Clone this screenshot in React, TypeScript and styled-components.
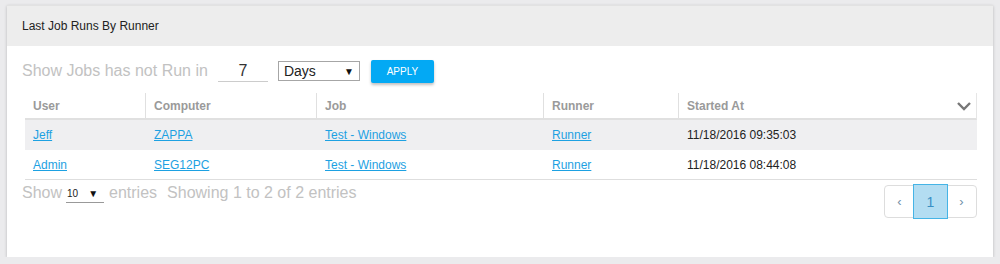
import styled, { createGlobalStyle } from 'styled-components'

const GlobalStyle = createGlobalStyle`
  body {
    margin: 0;
    background: #ebebed;
    font-family: 'Liberation Sans', Arial, sans-serif;
  }
`

interface IRun {
  user: string
  computer: string
  job: string
  runner: string
  started: string
}

const runs: IRun[] = [
  { user: 'Jeff', computer: 'ZAPPA', job: 'Test - Windows', runner: 'Runner', started: '11/18/2016 09:35:03' },
  { user: 'Admin', computer: 'SEG12PC', job: 'Test - Windows', runner: 'Runner', started: '11/18/2016 08:44:08' },
]

const columns = [
  { label: 'User', width: 120 },
  { label: 'Computer', width: 171 },
  { label: 'Job', width: 227 },
  { label: 'Runner', width: 135 },
  { label: 'Started At', width: 0 },
]

export default function App() {
  return (
    <>
      <GlobalStyle />
      <Card>
        <CardHeader>Last Job Runs By Runner</CardHeader>
        <CardBody>
          <FilterRow>
            <FilterLabel>Show Jobs has not Run in</FilterLabel>
            <DaysInput>7</DaysInput>
            <UnitSelect>
              <span>Days</span>
              <Caret>▼</Caret>
            </UnitSelect>
            <ApplyButton>APPLY</ApplyButton>
          </FilterRow>

          <Table>
            <HeadRow>
              {columns.map((c, i) => (
                <HeadCell key={c.label} $width={c.width} $first={i === 0}>
                  {c.label}
                  {i === columns.length - 1 && (
                    <Chevron width="16" height="10" viewBox="0 0 16 10">
                      <path d="M2 2 L8 8 L14 2" fill="none" stroke="#777" strokeWidth="2.4" />
                    </Chevron>
                  )}
                </HeadCell>
              ))}
            </HeadRow>
            {runs.map((r, i) => (
              <BodyRow key={r.user} $striped={i === 0}>
                <Cell $width={120}><Link>{r.user}</Link></Cell>
                <Cell $width={171}><Link>{r.computer}</Link></Cell>
                <Cell $width={227}><Link>{r.job}</Link></Cell>
                <Cell $width={135}><Link>{r.runner}</Link></Cell>
                <Cell $width={0}>{r.started}</Cell>
              </BodyRow>
            ))}
          </Table>

          <Footer>
            <Entries>
              Show
              <PageSize>
                <span>10</span>
                <Caret>▼</Caret>
              </PageSize>
              entries
              <Info>Showing 1 to 2 of 2 entries</Info>
            </Entries>
            <Pager>
              <PageButton>‹</PageButton>
              <PageButton $active>1</PageButton>
              <PageButton>›</PageButton>
            </Pager>
          </Footer>
        </CardBody>
      </Card>
    </>
  )
}

const Card = styled.div`
  margin: 5px 7px 0;
  width: 986px;
  height: 252px;
  background: #fff;
  box-shadow: 0 1px 3px rgba(0, 0, 0, 0.22);
  display: flex;
  flex-direction: column;
`

const CardHeader = styled.div`
  height: 41px;
  background: #ededed;
  padding: 0 15px;
  display: flex;
  align-items: center;
  font-size: 12px;
  color: #222;
  border-top: 1px solid #e2e2e2;
  box-sizing: border-box;
`

const CardBody = styled.div`
  padding: 13px 15px 0 15px;
`

const FilterRow = styled.div`
  display: flex;
  align-items: center;
  height: 24px;
`

const FilterLabel = styled.span`
  font-size: 16px;
  color: #c2c2c2;
`

const DaysInput = styled.div`
  margin-left: 10px;
  width: 50px;
  height: 20px;
  border-bottom: 1px solid #ccc;
  text-align: center;
  font-size: 16px;
  color: #333;
  line-height: 20px;
`

const UnitSelect = styled.div`
  margin-left: 10px;
  width: 82px;
  height: 20px;
  box-sizing: border-box;
  border: 1px solid #a6a6a6;
  display: flex;
  align-items: center;
  justify-content: space-between;
  padding: 0 5px;
  font-size: 14px;
  color: #222;
`

const Caret = styled.span`
  font-size: 10px;
  color: #111;
`

const ApplyButton = styled.button`
  margin-left: 11px;
  width: 63px;
  height: 23px;
  border: none;
  border-radius: 2px;
  background: #03a9f4;
  color: #fff;
  font-family: inherit;
  font-size: 10px;
  box-shadow: 0 2px 3px rgba(0, 0, 0, 0.25);
  padding: 0;
`

const Table = styled.div`
  margin: 10px 1px 0 3px;
  display: flex;
  flex-direction: column;
`

const HeadRow = styled.div`
  display: flex;
  height: 27px;
  box-sizing: border-box;
  border-bottom: 2px solid #e0e0e0;
  border-right: 1px solid #e6e6e6;
`

const HeadCell = styled.div<{ $width: number; $first: boolean }>`
  ${p => (p.$width ? `width: ${p.$width}px;` : 'flex: 1;')}
  display: flex;
  align-items: center;
  padding-left: 8px;
  box-sizing: border-box;
  font-size: 12px;
  font-weight: bold;
  color: #9a9a9a;
  border-left: ${p => (p.$first ? 'none' : '1px solid #e0e0e0')};
`

const Chevron = styled.svg`
  margin-left: auto;
  margin-right: 4px;
`

const BodyRow = styled.div<{ $striped: boolean }>`
  display: flex;
  height: 30px;
  background: ${p => (p.$striped ? '#efeff1' : '#fff')};
  border-bottom: 1px solid ${p => (p.$striped ? '#efeff1' : '#dedede')};
  box-sizing: border-box;
`

const Cell = styled.div<{ $width: number }>`
  ${p => (p.$width ? `width: ${p.$width}px;` : 'flex: 1;')}
  display: flex;
  align-items: center;
  padding-left: 8px;
  box-sizing: border-box;
  font-size: 12px;
  color: #222;
  & + & {
    padding-left: 9px;
  }
`

const Link = styled.a`
  color: #1da1e2;
  text-decoration: underline;
  cursor: pointer;
`

const Footer = styled.div`
  display: flex;
  justify-content: space-between;
  align-items: flex-start;
  margin-right: 1px;
  margin-top: 3px;
`

const Entries = styled.div`
  display: flex;
  align-items: center;
  font-size: 16px;
  color: #c2c2c2;
  height: 20px;
`

const PageSize = styled.div`
  margin: 2px 5px 0 4px;
  width: 38px;
  height: 17px;
  box-sizing: border-box;
  border-bottom: 1px solid #999;
  display: flex;
  align-items: center;
  justify-content: space-between;
  padding: 0 6px 0 1px;
  font-size: 10px;
  color: #222;
`

const Info = styled.span`
  margin-left: 10px;
`

const Pager = styled.div`
  margin-top: 2px;
  display: flex;
  border: 1px solid #ddd;
  border-radius: 4px;
  height: 33px;
  box-sizing: border-box;
`

const PageButton = styled.div<{ $active?: boolean }>`
  width: ${p => (p.$active ? 33 : 29)}px;
  display: flex;
  align-items: center;
  justify-content: center;
  font-size: ${p => (p.$active ? 14 : 13)}px;
  color: ${p => (p.$active ? '#3a8fc4' : '#6f8fa8')};
  background: ${p => (p.$active ? '#b3ddf2' : 'transparent')};
  outline: ${p => (p.$active ? '1px solid #45b4e6' : 'none')};
  margin: ${p => (p.$active ? '-1px 0' : '0')};
`
